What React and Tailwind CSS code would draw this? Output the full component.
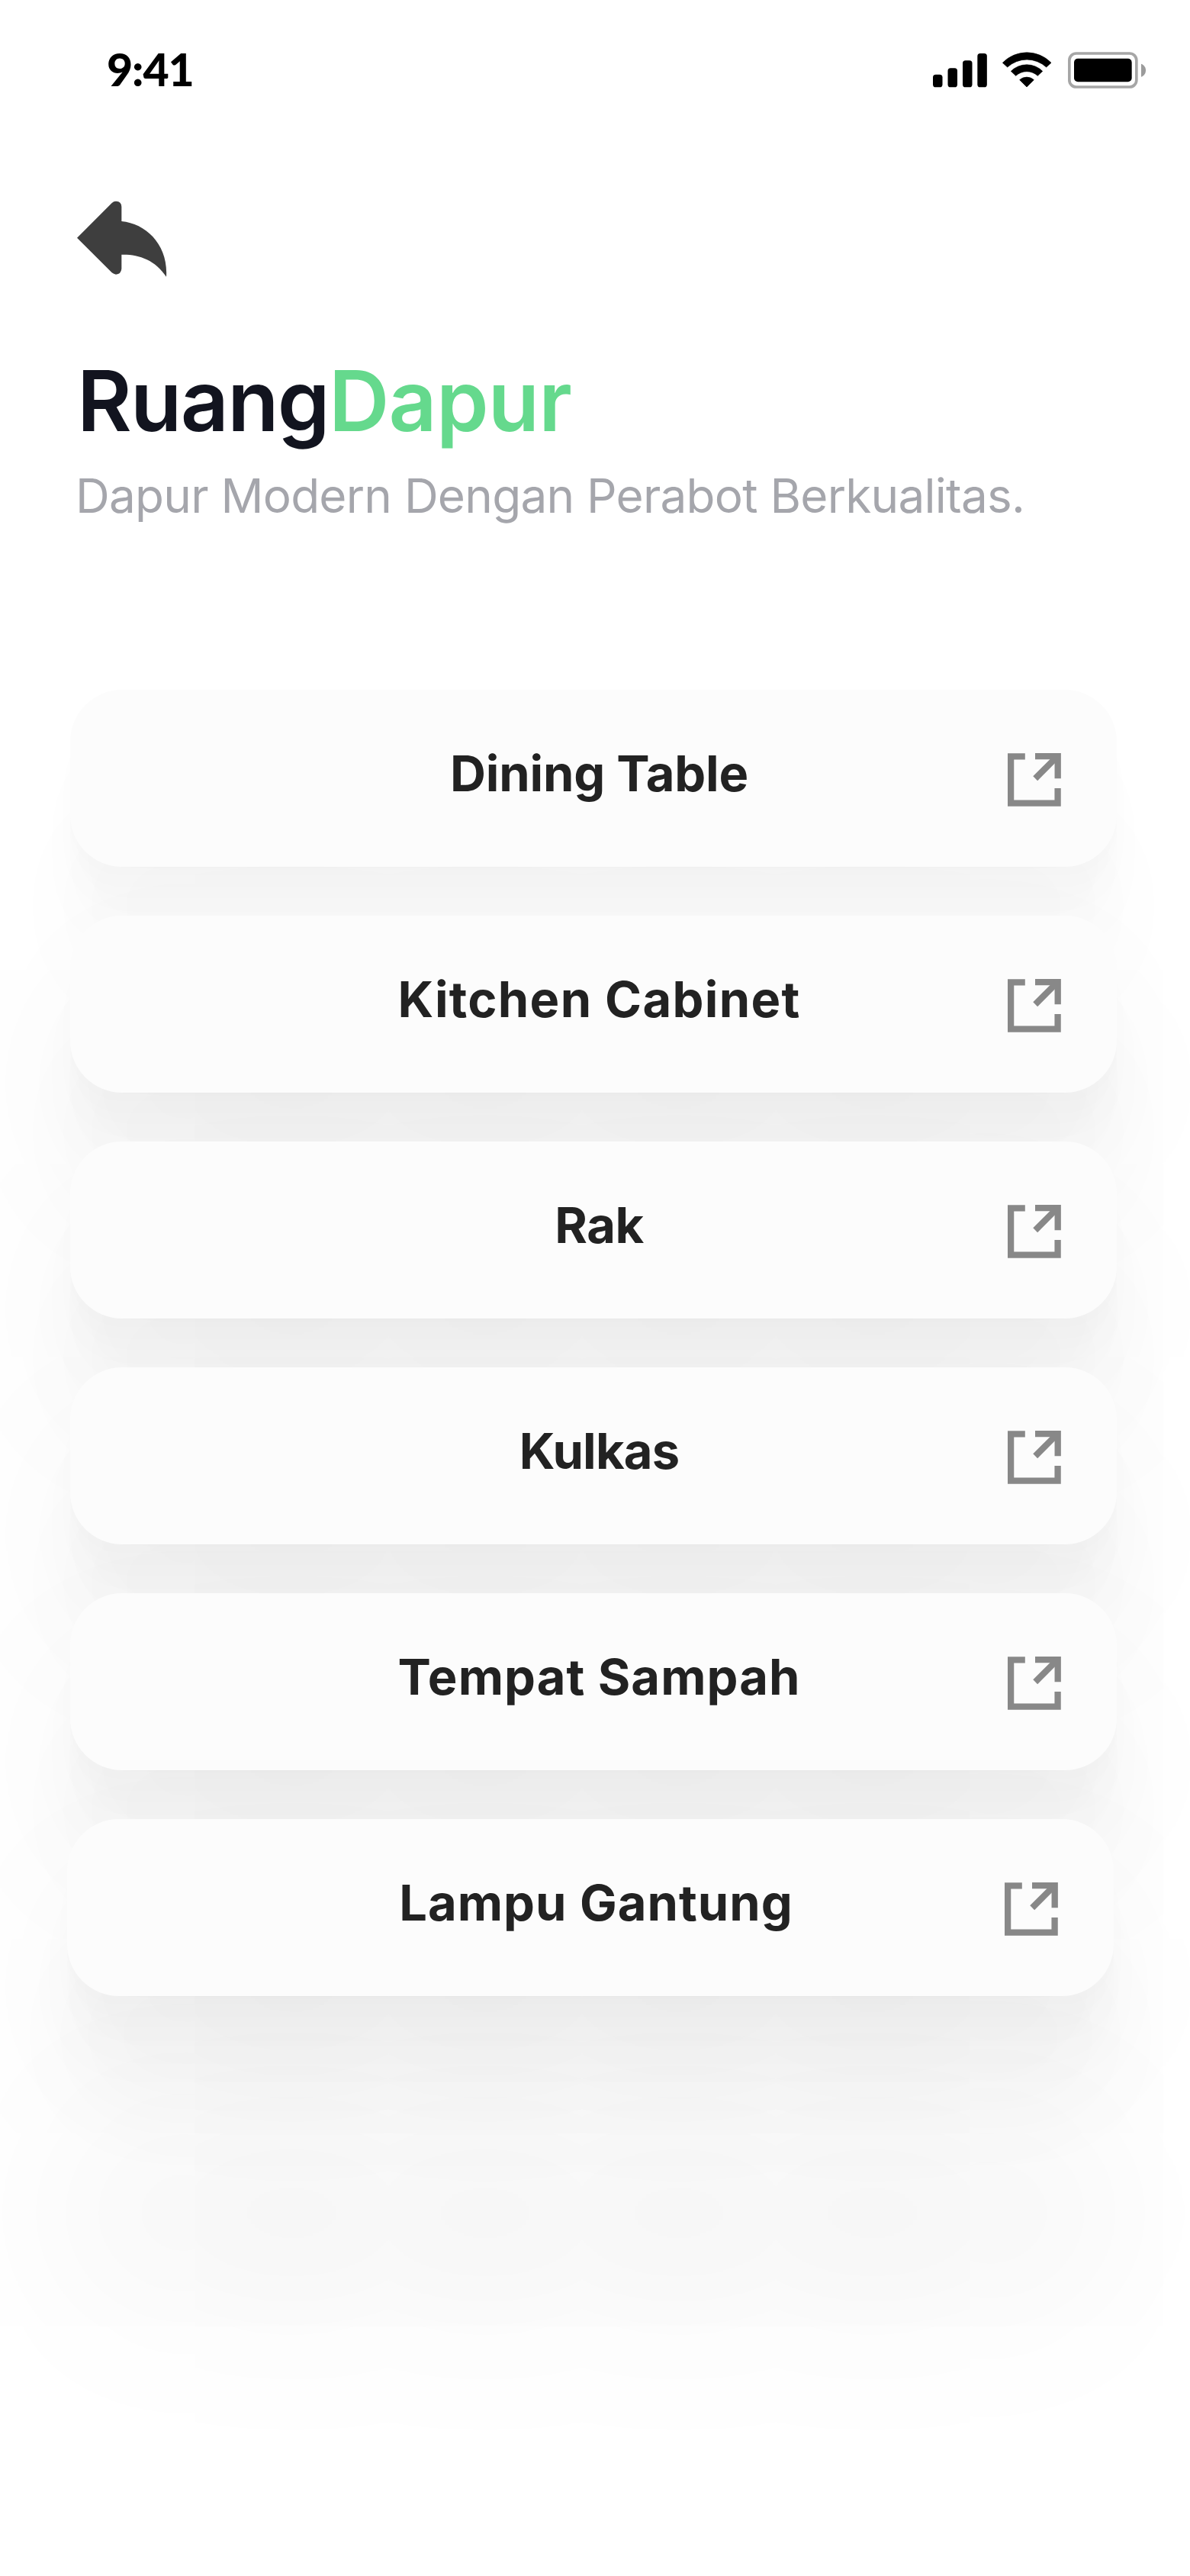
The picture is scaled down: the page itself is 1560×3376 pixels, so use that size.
const items = [
  { name: "Dining Table", tracking: "tracking-[-0.2px]" },
  { name: "Kitchen Cabinet", tracking: "tracking-[1.3px]" },
  { name: "Rak", tracking: "tracking-[-0.5px]" },
  { name: "Kulkas", tracking: "tracking-[-0.8px]" },
  { name: "Tempat Sampah", tracking: "tracking-[1.05px]" },
  { name: "Lampu Gantung", tracking: "tracking-[1px]", shift: "-ml-1 mr-1" },
];

function SignalIcon() {
  return (
    <svg className="h-12 w-[71px]" viewBox="69 54 213 144" fill="#000">
      <rect x="69" y="143" width="37.5" height="50" rx="11" />
      <rect x="127.5" y="118" width="37.5" height="75" rx="11" />
      <rect x="186" y="88" width="37.5" height="105" rx="11" />
      <rect x="244" y="60" width="37.5" height="133" rx="11" />
    </svg>
  );
}

function WifiIcon() {
  return (
    <svg className="ml-[20px] h-12 w-[65px]" viewBox="343 54 195 144" fill="#000" stroke="#000" strokeWidth="2" strokeLinejoin="round">
      <path d="M344 97A133 133 0 0 1 535 97L516 114A113 113 0 0 0 363 114Z" />
      <path d="M377 130A88 88 0 0 1 501 130L482 148A63 63 0 0 0 396 148Z" />
      <path d="M411 164A42 42 0 0 1 467 164L439 192Z" />
    </svg>
  );
}

function BatteryIcon() {
  return (
    <svg className="ml-[21px] h-12 w-[102px]" viewBox="597 54 306 144">
      <rect x="602.5" y="60" width="264" height="132" rx="27" fill="none" stroke="#a6a6a6" strokeWidth="11" />
      <rect x="621" y="80" width="227" height="92" rx="15" fill="#000" />
      <path d="M885 101C909 109 909 144 885 152Z" fill="#9b9b9b" />
    </svg>
  );
}

function BackIcon() {
  return (
    <svg className="h-[100px] w-[118px]" viewBox="65 670 354 300" fill="#3e3e3e">
      <path d="M65 816L202 679Q209 672 218 672Q240 673 240 694V751C338 760 424 845 416 969C372 902 306 880 240 882V938Q238 959 218 960Q209 959 202 953Z" />
    </svg>
  );
}

function OpenIcon() {
  return (
    <svg className="mt-1 mr-[73px] h-[70px] w-[70px] shrink-0" viewBox="0 0 70 70" fill="none" stroke="#888" strokeWidth="8.3">
      <path d="M22.8 4.3H4.1V65.6H65.6V46" />
      <path d="M36 4.1H65.7V33.2" />
      <path d="M36.2 33.2L64 5.4" />
    </svg>
  );
}

export default function App() {
  return (
    <div className="flex min-h-[3376px] w-[1560px] flex-col overflow-hidden bg-white">
      <header className="flex h-[184px] items-start justify-between pt-[60px] pr-[58px] pl-[140px]">
        <span className="mt-px font-['Lato',sans-serif] text-[59px] leading-[60px] font-black tracking-[-1.1px] text-black">9:41</span>
        <div className="flex items-center pt-2">
          <SignalIcon />
          <WifiIcon />
          <BatteryIcon />
        </div>
      </header>

      <section className="flex h-[720px] flex-col items-start pt-[79px] pl-[101px]">
        <BackIcon />
        <h1 className="mt-[102px] font-['Inter',sans-serif] text-[110px] leading-[120px] font-semibold text-[#12141f]">
          <span className="tracking-[-1.7px]">Ruang</span>
          <span className="tracking-[-0.8px] text-[#65d98d]">Dapur</span>
        </h1>
        <p className="mt-[25px] -ml-0.5 font-['Inter',sans-serif] text-[62px] leading-[80px] font-normal tracking-[-0.75px] whitespace-nowrap text-[#a5a6ac]">
          Dapur Modern Dengan Perabot Berkualitas.
        </p>
      </section>

      <main className="flex flex-col gap-16 pr-24 pl-[92px]">
        {items.map(({ name, tracking, shift }) => (
          <button
            key={name}
            className={`flex h-[232px] items-center rounded-[68px] bg-[#fcfcfc] pl-[158px] font-['Inter',sans-serif] text-[65px] font-bold text-[#222] shadow-[0_400px_320px_rgba(0,0,0,0.05),0_167px_134px_rgba(0,0,0,0.0197),0_89px_71px_rgba(0,0,0,0.0163),0_50px_40px_rgba(0,0,0,0.0137),0_27px_21px_rgba(0,0,0,0.009),0_11px_9px_rgba(0,0,0,0.006)] ${shift ?? ""}`}
          >
            <span className={`flex-1 pb-3 text-center leading-[80px] ${tracking}`}>{name}</span>
            <OpenIcon />
          </button>
        ))}
      </main>
    </div>
  );
}
